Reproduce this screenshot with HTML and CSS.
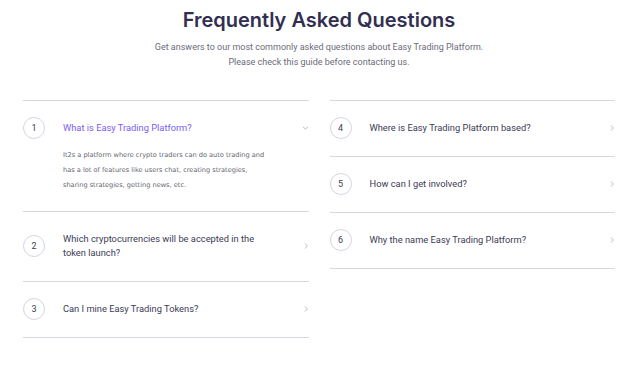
FILE: index.html
```html
<!DOCTYPE html>
<html>
  <head>
    <meta charset="UTF-8" />
    <meta name="viewport" content="width=device-width, initial-scale=1.0" />
    <title>Frequently Asked Questions</title>
    <link rel="stylesheet" href="styles.css">
  </head>
  <body>
    <section class="faq">
      <h2 class="faq-title">Frequently Asked Questions</h2>
      <p class="faq-sub">
        Get answers to our most commonly asked questions about Easy Trading Platform.<br />
        Please check this guide before contacting us.
      </p>
      <div class="faq-cols">
        <div class="faq-col">
          <div class="faq-item open">
            <div class="faq-head">
              <span class="num">1</span>
              <span class="q">What is Easy Trading Platform?</span>
              <svg class="chev" width="8" height="8" viewBox="0 0 8 8"><path d="M2 2.8 L4.5 5.2 L7 2.8" fill="none" stroke="#b8bccb" stroke-width="1"/></svg>
            </div>
            <p class="answer">
              It2s a platform where crypto traders can do auto trading and<br />
              has a lot of features like users chat, creating strategies,<br />
              sharing strategies, getting news, etc.
            </p>
          </div>
          <div class="faq-item">
            <div class="faq-head">
              <span class="num">2</span>
              <span class="q">Which cryptocurrencies will be accepted in the token launch?</span>
              <svg class="chev" width="8" height="8" viewBox="0 0 8 8"><path d="M4 1.5 L6.4 4 L4 6.5" fill="none" stroke="#b8bccb" stroke-width="1"/></svg>
            </div>
          </div>
          <div class="faq-item">
            <div class="faq-head">
              <span class="num">3</span>
              <span class="q">Can I mine Easy Trading Tokens?</span>
              <svg class="chev" width="8" height="8" viewBox="0 0 8 8"><path d="M4 1.5 L6.4 4 L4 6.5" fill="none" stroke="#b8bccb" stroke-width="1"/></svg>
            </div>
          </div>
        </div>
        <div class="faq-col">
          <div class="faq-item">
            <div class="faq-head">
              <span class="num">4</span>
              <span class="q">Where is Easy Trading Platform based?</span>
              <svg class="chev" width="8" height="8" viewBox="0 0 8 8"><path d="M4 1.5 L6.4 4 L4 6.5" fill="none" stroke="#b8bccb" stroke-width="1"/></svg>
            </div>
          </div>
          <div class="faq-item">
            <div class="faq-head">
              <span class="num">5</span>
              <span class="q">How can I get involved?</span>
              <svg class="chev" width="8" height="8" viewBox="0 0 8 8"><path d="M4 1.5 L6.4 4 L4 6.5" fill="none" stroke="#b8bccb" stroke-width="1"/></svg>
            </div>
          </div>
          <div class="faq-item">
            <div class="faq-head">
              <span class="num">6</span>
              <span class="q">Why the name Easy Trading Platform?</span>
              <svg class="chev" width="8" height="8" viewBox="0 0 8 8"><path d="M4 1.5 L6.4 4 L4 6.5" fill="none" stroke="#b8bccb" stroke-width="1"/></svg>
            </div>
          </div>
        </div>
      </div>
    </section>
  </body>
</html>
```

FILE: styles.css
```css
body {
  margin: 0;
  font-family: Roboto, "Liberation Sans", sans-serif;
  background: #fff;
  color: #3c3b53;
}
.faq {
  padding: 6px 25px 0 23px;
}
.faq-title {
  margin: 0;
  text-align: center;
  font-family: Inter, sans-serif;
  font-weight: 600;
  font-size: 20px;
  line-height: 28px;
  color: #312e52;
}
.faq-sub {
  margin: 6px 0 0;
  text-align: center;
  font-size: 9px;
  line-height: 15px;
  color: #6b6b78;
}
.faq-cols {
  display: grid;
  grid-template-columns: 1fr 1fr;
  column-gap: 21px;
  margin-top: 30px;
}
.faq-col {
  border-top: 1px solid #d5d8e2;
}
.faq-item {
  border-bottom: 1px solid #d5d8e2;
  padding: 20px 0 21px;
}
.faq-head {
  display: flex;
  align-items: center;
}
.num {
  flex: none;
  width: 20px;
  height: 20px;
  margin: -4px 0;
  border: 1px solid #d3d6e3;
  border-radius: 50%;
  display: flex;
  align-items: center;
  justify-content: center;
  font-size: 9px;
  color: #3c3b53;
}
.q {
  flex: 1;
  margin-left: 18px;
  padding-right: 40px;
  font-size: 9.3px;
  line-height: 14px;
}
.open .q {
  color: #7b5cf2;
}
.chev {
  flex: none;
}
.answer {
  margin: 13px 0 -3px 40px;
  font-family: "DejaVu Sans", sans-serif;
  font-size: 6.6px;
  line-height: 15px;
  color: #66666f;
}
```
